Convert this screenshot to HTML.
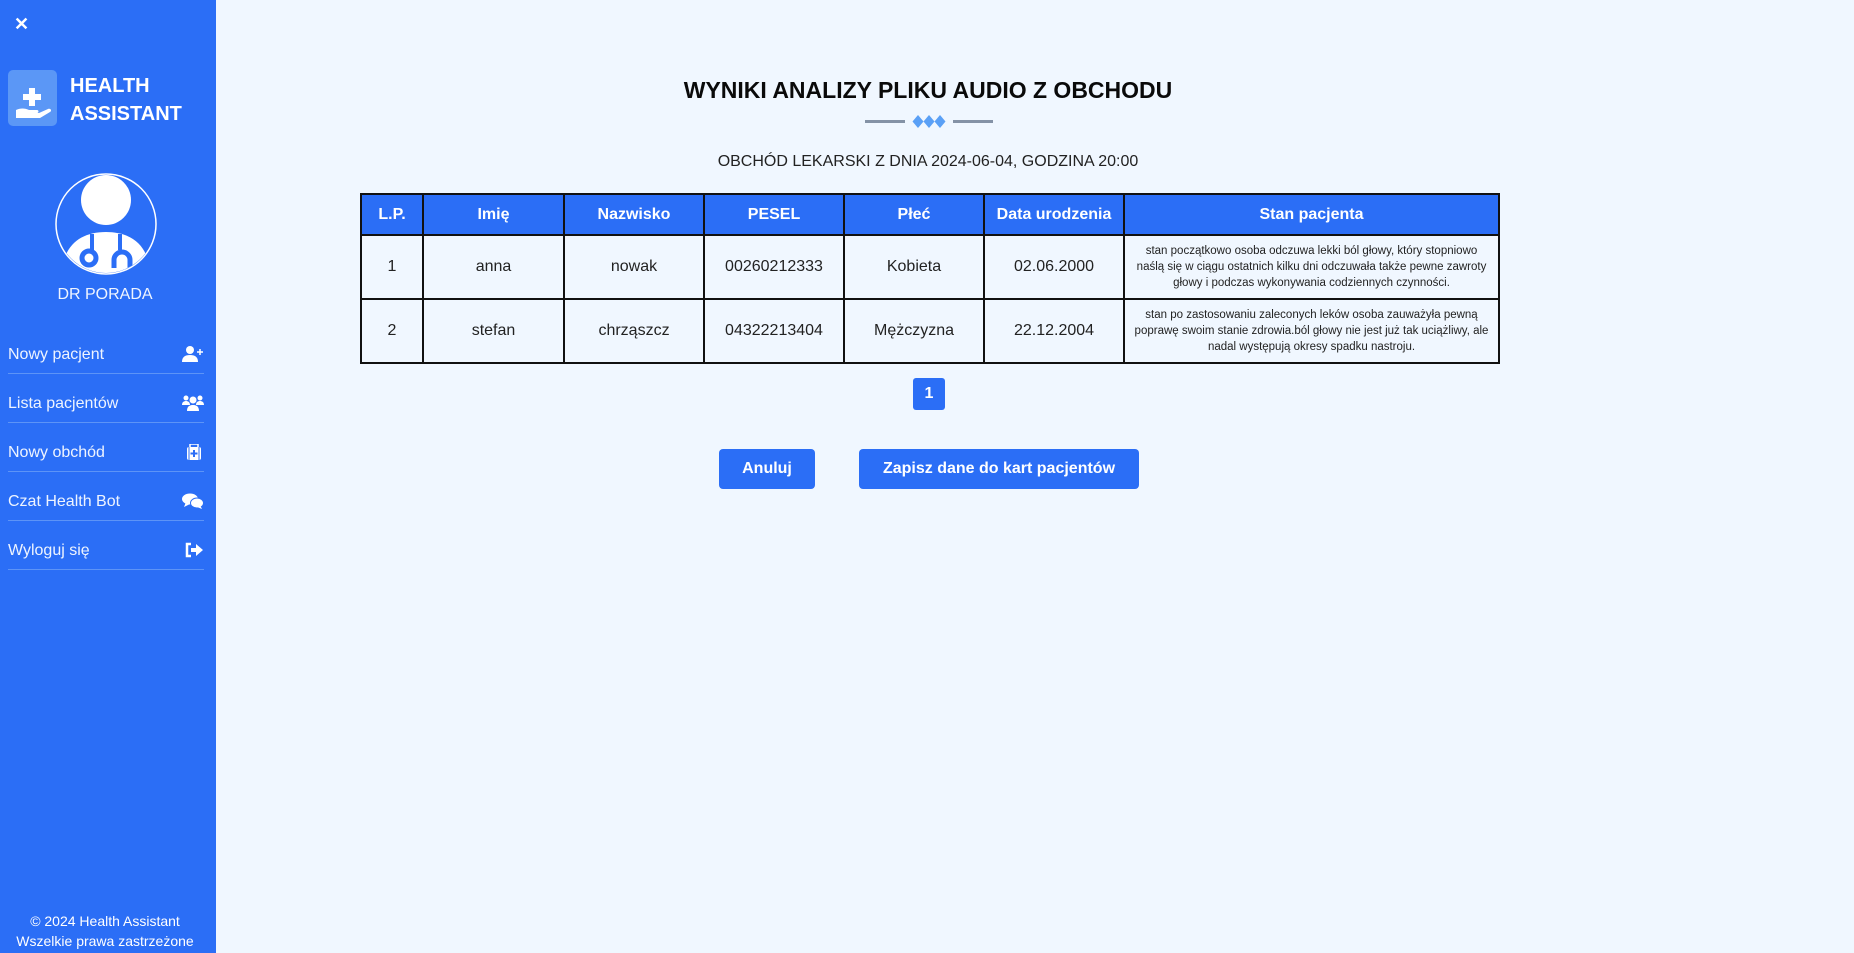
<!DOCTYPE html>
<html><head><meta charset="utf-8"><style>
*{margin:0;padding:0;box-sizing:border-box}
body{width:1854px;height:953px;background:#f0f7ff;font-family:"Liberation Sans",sans-serif;position:relative;overflow:hidden;color:#111}
.sb{position:absolute;left:0;top:0;width:216px;height:953px;background:#2b6ef6;color:#fff}
.abs{position:absolute}
.nav{position:absolute;left:8px;width:196px;height:49px;border-bottom:1px solid #5d94f7;font-size:16px;color:#eef4ff}
.nav span{position:absolute;left:0;top:21px}
.nav svg{position:absolute;right:0;top:21px}
table{position:absolute;left:360px;top:193px;width:1138px;border-collapse:collapse;table-layout:fixed}
td,th{border:2px solid #111;text-align:center;font-size:16px;color:#222}
th{background:#2b6ef6;color:#fff;height:41px;font-weight:bold}
td{height:64px;font-weight:normal}
td.s{font-size:11.5px;line-height:16px;padding:0 6px}
.btn{position:absolute;background:#2b6ef6;color:#fff;font-weight:bold;font-size:16px;border-radius:4px;text-align:center;line-height:40px;height:40px;top:449px}
</style></head><body>
<div class="sb">
 <div class="abs" style="left:14px;top:14px;font-size:18px;font-weight:bold">✕</div>
 <div class="abs" style="left:8px;top:70px;width:49px;height:56px;background:#5b97f6;border-radius:5px">
  <svg width="49" height="56" viewBox="0 0 49 56"><path d="M21 18h6v6h6v6h-6v6h-6v-6h-6v-6h6z" fill="#fff"/><path d="M8 40c4-2 9-2 13 0h8c2 0 2 3 0 3h-6h8l9-4c3-1 4 2 2 3l-10 6h-24z" fill="#fff"/></svg>
 </div>
 <div class="abs" style="left:70px;top:72px;font-size:20px;font-weight:bold;line-height:28px">HEALTH<br>ASSISTANT</div>
 <svg class="abs" style="left:54px;top:172px" width="104" height="104" viewBox="0 0 104 104">
  <defs><clipPath id="c"><circle cx="52" cy="52" r="49"/></clipPath></defs>
  <circle cx="52" cy="52" r="50" fill="none" stroke="#fff" stroke-width="1.5"/>
  <circle cx="52" cy="28" r="25" fill="#fff"/>
  <g clip-path="url(#c)"><path d="M8 104c0-30 18-44 44-44s44 14 44 44z" fill="#fff"/>
  <circle cx="35" cy="86" r="7" fill="none" stroke="#2b6ef6" stroke-width="5"/>
  <path d="M60 96v-8a8 8 0 0 1 16 0v8" fill="none" stroke="#2b6ef6" stroke-width="5"/>
  <path d="M38 62v16M66 62v16" stroke="#2b6ef6" stroke-width="4"/></g>
 </svg>
 <div class="abs" style="left:0;width:210px;top:286px;text-align:center;font-size:16px;color:#eef4ff">DR PORADA</div>
 <div class="nav" style="top:325px"><span>Nowy pacjent</span><svg width="22" height="16" viewBox="0 0 22 16"><circle cx="8" cy="4" r="4" fill="#fff"/><path d="M0 16c0-5 3-7 8-7s8 2 8 7z" fill="#fff"/><path d="M18 3v6M15 6h6" stroke="#fff" stroke-width="1.5"/></svg></div>
 <div class="nav" style="top:374px"><span>Lista pacjentów</span><svg width="22" height="16" viewBox="0 0 22 16"><circle cx="4" cy="3" r="2.5" fill="#fff"/><circle cx="18" cy="3" r="2.5" fill="#fff"/><circle cx="11" cy="5" r="3.5" fill="#fff"/><path d="M0 10c0-3 2-4 4-4s4 1 4 4zM14 10c0-3 2-4 4-4s4 1 4 4zM5 16c0-5 3-6 6-6s6 1 6 6z" fill="#fff"/></svg></div>
 <div class="nav" style="top:423px"><span>Nowy obchód</span><svg width="22" height="16" viewBox="0 0 22 16"><rect x="5" y="3" width="14" height="13" rx="2" fill="#fff"/><rect x="8" y="0" width="8" height="4" fill="none" stroke="#fff" stroke-width="1.5"/><path d="M12 6v7M8.5 9.5h7" stroke="#2b6ef6" stroke-width="2"/><path d="M7 3v13M17 3v13" stroke="#2b6ef6" stroke-width="1"/></svg></div>
 <div class="nav" style="top:472px"><span>Czat Health Bot</span><svg width="22" height="16" viewBox="0 0 22 16"><ellipse cx="8" cy="6" rx="8" ry="5.5" fill="#fff"/><path d="M2 14l2-5 4 2z" fill="#fff"/><ellipse cx="15" cy="10" rx="6.5" ry="5" fill="#fff" stroke="#2b6ef6" stroke-width="1"/><path d="M20 16l-2-4-3 2z" fill="#fff"/></svg></div>
 <div class="nav" style="top:521px"><span>Wyloguj się</span><svg width="22" height="16" viewBox="0 0 22 16"><path d="M9 2H5v12h4" fill="none" stroke="#fff" stroke-width="2.5"/><path d="M9 6h5V2l7 6-7 6v-4H9z" fill="#fff"/></svg></div>
 <div class="abs" style="left:0;width:210px;top:911px;text-align:center;font-size:14px;line-height:20px">© 2024 Health Assistant<br>Wszelkie prawa zastrzeżone</div>
</div>

<div class="abs" style="left:600px;width:656px;top:77px;text-align:center;font-size:23px;font-weight:bold;color:#0a0a0a">WYNIKI ANALIZY PLIKU AUDIO Z OBCHODU</div>
<div class="abs" style="left:865px;top:120px;width:40px;height:3px;background:#8492a6"></div>
<div class="abs" style="left:953px;top:120px;width:40px;height:3px;background:#8492a6"></div>
<svg class="abs" style="left:912px;top:115px" width="34" height="13"><path d="M6 0l5.5 6.5L6 13 .5 6.5zM17 0l5.5 6.5L17 13l-5.5-6.5zM28 0l5.5 6.5L28 13l-5.5-6.5z" fill="#5aa0f6"/></svg>
<div class="abs" style="left:600px;width:656px;top:153px;text-align:center;font-size:16px;color:#222">OBCHÓD LEKARSKI Z DNIA 2024-06-04, GODZINA 20:00</div>

<table>
<colgroup><col style="width:62px"><col style="width:141px"><col style="width:140px"><col style="width:140px"><col style="width:140px"><col style="width:140px"><col style="width:375px"></colgroup>
<tr><th>L.P.</th><th>Imię</th><th>Nazwisko</th><th>PESEL</th><th>Płeć</th><th>Data urodzenia</th><th>Stan pacjenta</th></tr>
<tr><td>1</td><td>anna</td><td>nowak</td><td>00260212333</td><td>Kobieta</td><td>02.06.2000</td><td class="s">stan początkowo osoba odczuwa lekki ból głowy, który stopniowo naślą się w ciągu ostatnich kilku dni odczuwała także pewne zawroty głowy i podczas wykonywania codziennych czynności.</td></tr>
<tr><td>2</td><td>stefan</td><td>chrząszcz</td><td>04322213404</td><td>Mężczyzna</td><td>22.12.2004</td><td class="s">stan po zastosowaniu zaleconych leków osoba zauważyła pewną poprawę swoim stanie zdrowia.ból głowy nie jest już tak uciążliwy, ale nadal występują okresy spadku nastroju.</td></tr>
</table>

<div class="abs" style="left:913px;top:378px;width:32px;height:32px;background:#2b6ef6;border-radius:3px;color:#fff;font-weight:bold;font-size:16px;text-align:center;line-height:32px">1</div>
<div class="btn" style="left:719px;width:96px">Anuluj</div>
<div class="btn" style="left:859px;width:280px">Zapisz dane do kart pacjentów</div>
</body></html>
